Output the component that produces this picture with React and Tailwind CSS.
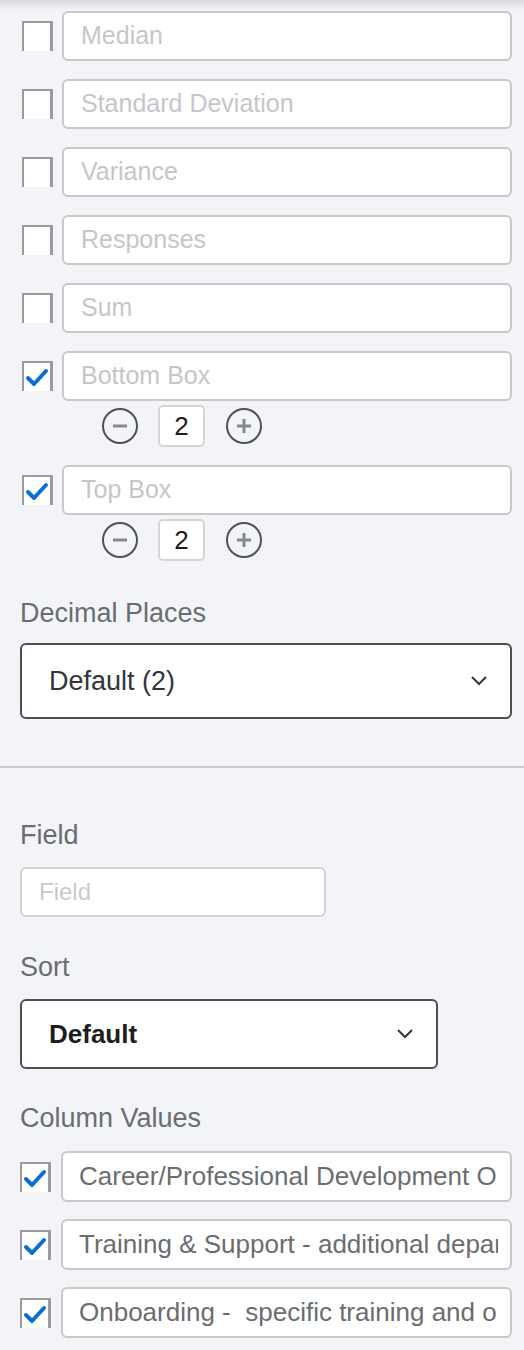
import React from 'react';

const font = { fontFamily: '"Liberation Sans", Arial, sans-serif' };

const Check = ({ checked }) => (
  <div className="w-[31px] h-[30px] shrink-0 bg-white border-l-2 border-t-2 border-r-[3px] border-[#9b9b9f] flex items-center justify-center">
    {checked && (
      <svg width="24" height="22" viewBox="0 0 24 22" fill="none">
        <path d="M3 12 L9 18 L21 5" stroke="#0b6ed3" strokeWidth="4" strokeLinecap="round" strokeLinejoin="round" />
      </svg>
    )}
  </div>
);

const Circle = ({ plus }) => (
  <div className="w-[36px] h-[36px] rounded-full border-2 border-[#4f5255] flex items-center justify-center">
    <svg width="20" height="20" viewBox="0 0 20 20">
      <path d={plus ? 'M3 10 H17 M10 3 V17' : 'M3 10 H17'} stroke="#85888c" strokeWidth="3" />
    </svg>
  </div>
);

const Stepper = () => (
  <div className="flex items-center mt-[4px] ml-[102px] h-[42px]">
    <Circle />
    <div className="ml-[20px] w-[47px] h-[42px] bg-white border-2 border-[#d5d5d8] rounded-[5px] flex items-center justify-center text-[26px] text-[#1d1d1f]">
      2
    </div>
    <div className="ml-[21px]">
      <Circle plus />
    </div>
  </div>
);

const StatRow = ({ label, checked, stepper }) => (
  <div>
    <div className="flex items-center pl-[22px]">
      <Check checked={checked} />
      <div className="ml-[9px] w-[450px] h-[50px] bg-white border-2 border-[#c9c9cc] rounded-[6px] flex items-center pl-[17px] text-[25px] text-[#c6c6c9]">
        {label}
      </div>
    </div>
    {stepper && <Stepper />}
  </div>
);

const Chevron = () => (
  <svg width="18" height="12" viewBox="0 0 18 12" fill="none">
    <path d="M2 2 L9 9 L16 2" stroke="#32363a" strokeWidth="2" />
  </svg>
);

const Label = ({ children }) => (
  <div className="text-[27px] leading-[32px] text-[#6a6d70]">{children}</div>
);

// column value boxes clip their text at the right edge, like the original
const ColumnRow = ({ text }) => (
  <div className="flex items-center pl-[20px]">
    <Check checked />
    <div className="ml-[10px] w-[451px] h-[51px] bg-white border-2 border-[#c9c9cc] rounded-[6px] flex items-center pl-[16px] pr-[12px]">
      <div className="w-full overflow-hidden whitespace-pre text-[26px] text-[#6a6d70]">{text}</div>
    </div>
  </div>
);

export default function App() {
  const stats = [
    { label: 'Median' },
    { label: 'Standard Deviation' },
    { label: 'Variance' },
    { label: 'Responses' },
    { label: 'Sum' },
    { label: 'Bottom Box', checked: true, stepper: true },
    { label: 'Top Box', checked: true, stepper: true },
  ];

  return (
    <div className="w-[524px] h-[1350px] bg-[#f3f4f8] overflow-hidden" style={font}>
      <div className="h-[10px] bg-gradient-to-b from-[#d8d8dd] to-[#f3f4f8]" />
      <div className="mt-[1px] flex flex-col gap-[18px]">
        {stats.map((s) => (
          <StatRow key={s.label} {...s} />
        ))}
      </div>

      <div className="pl-[20px] mt-[36px]">
        <Label>Decimal Places</Label>
        <div className="mt-[14px] w-[492px] h-[76px] bg-white border-2 border-[#4b4e52] rounded-[6px] flex items-center justify-between pl-[27px] pr-[22px]">
          <span className="text-[27px] text-[#32363a]">Default (2)</span>
          <Chevron />
        </div>
      </div>

      <div className="mt-[47px] h-[2px] bg-[#cbcbce]" />

      <div className="pl-[20px] mt-[51px]">
        <Label>Field</Label>
        <div className="mt-[16px] w-[306px] h-[50px] bg-white border-2 border-[#d3d3d6] rounded-[6px] flex items-center pl-[17px] text-[24px] text-[#c9c9cc]">
          Field
        </div>

        <div className="mt-[34px]">
          <Label>Sort</Label>
        </div>
        <div className="mt-[16px] w-[418px] h-[70px] bg-white border-2 border-[#4b4e52] rounded-[6px] flex items-center justify-between pl-[27px] pr-[22px]">
          <span className="text-[26px] font-semibold text-[#1d1d1f]">Default</span>
          <Chevron />
        </div>

        <div className="mt-[33px]">
          <Label>Column Values</Label>
        </div>
      </div>

      <div className="mt-[17px] flex flex-col gap-[17px]">
        <ColumnRow text="Career/Professional Development Opportunities" />
        <ColumnRow text="Training & Support - additional department" />
        <ColumnRow text="Onboarding -  specific training and orientation" />
      </div>
    </div>
  );
}
